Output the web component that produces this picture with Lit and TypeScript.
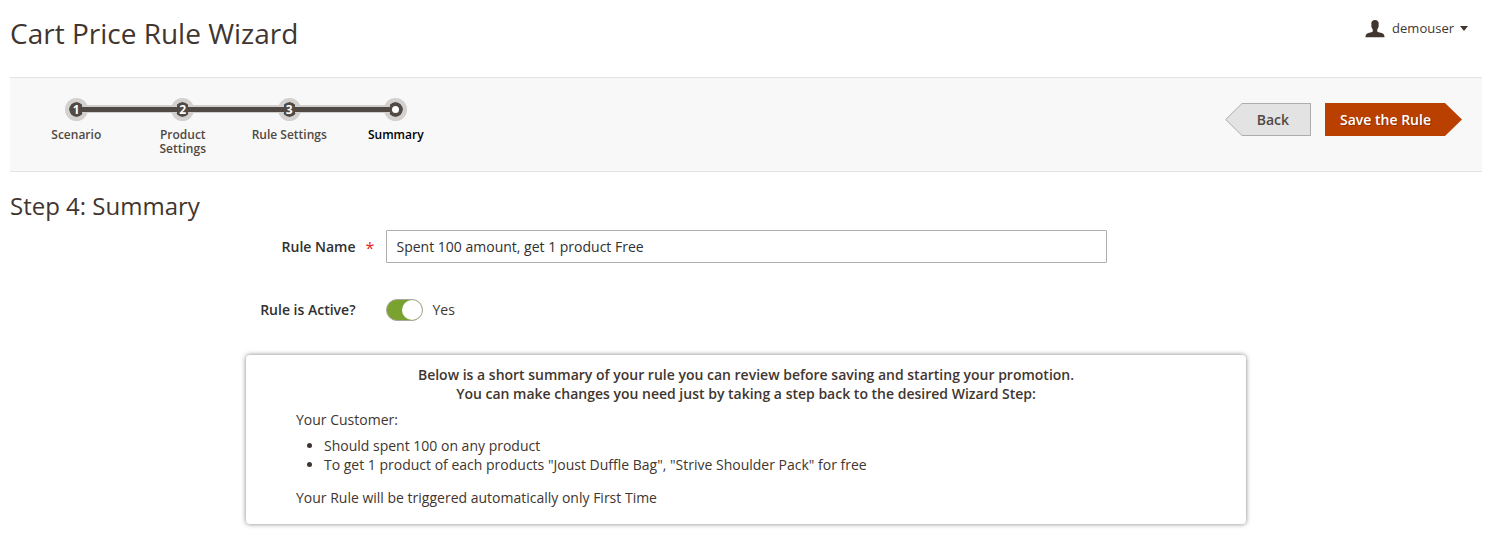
import { LitElement, html, css, svg } from "lit";
import { customElement, property, state } from "lit/decorators.js";
import { classMap } from "lit/directives/class-map.js";

interface Step {
  label: string;
}

@customElement("wizard-steps")
class WizardSteps extends LitElement {
  @property({ attribute: false }) steps: Step[] = [];
  @property({ type: Number }) current = 0;

  static styles = css`
    :host {
      display: block;
      width: 426px;
    }
    .list {
      display: flex;
      margin: 0;
      padding: 0;
      list-style: none;
    }
    .step {
      flex: 1 1 0;
      display: flex;
      flex-direction: column;
      align-items: center;
    }
    .rail {
      display: grid;
      grid-template-columns: 1fr 23px 1fr;
      align-items: center;
      align-self: stretch;
      height: 23px;
    }
    .line {
      z-index: 1;
      height: 5px;
      background: #514943;
      box-shadow: 0 -2px 0 #d0cfcd, 0 1px 0 #d0cfcd;
    }
    .line.before {
      margin-right: -6px;
    }
    .line.after {
      margin-left: -6px;
    }
    .line.none {
      visibility: hidden;
    }
    .ring {
      box-sizing: border-box;
      width: 23px;
      height: 23px;
      border: 4px solid #d2d1cf;
      border-radius: 50%;
      background: #514943;
      background-clip: padding-box;
      color: #fff;
      font-size: 12px;
      font-weight: 700;
      line-height: 15px;
      text-align: center;
    }
    .dot {
      width: 7px;
      height: 7px;
      margin: 4px;
      border-radius: 50%;
      background: #fff;
    }
    .label {
      display: block;
      max-width: 80px;
      margin-top: 7px;
      color: #514943;
      font-size: 12px;
      font-weight: 600;
      line-height: 14px;
      text-align: center;
      text-decoration: none;
    }
    .label.active {
      color: #000;
    }
  `;

  render() {
    const last = this.steps.length - 1;
    return html`<ol class="list">
      ${this.steps.map(
        (s, i) => html`<li class="step">
          <div class="rail">
            <span class=${classMap({ line: true, before: true, none: i === 0 })}></span>
            <div class="ring">
              ${i === this.current ? html`<div class="dot"></div>` : i + 1}
            </div>
            <span class=${classMap({ line: true, after: true, none: i === last })}></span>
          </div>
          <a class=${classMap({ label: true, active: i === this.current })} href="#">${s.label}</a>
        </li>`
      )}
    </ol>`;
  }
}

@customElement("app-root")
class AppRoot extends LitElement {
  @state() private active = true;

  private steps: Step[] = [
    { label: "Scenario" },
    { label: "Product Settings" },
    { label: "Rule Settings" },
    { label: "Summary" },
  ];

  static styles = css`
    :host {
      display: block;
      padding: 0 9px 27px 10px;
      background: #fff;
      color: #41362f;
      font-family: "Open Sans", "Noto Sans", sans-serif;
      font-size: 14px;
      line-height: 19px;
    }
    .header {
      display: flex;
      justify-content: space-between;
      align-items: flex-start;
      padding: 13px 14px 24px 0;
    }
    .title {
      margin: 0;
      font-size: 28px;
      font-weight: 400;
      line-height: 40px;
    }
    .user {
      display: flex;
      align-items: center;
      padding: 6px 0 0;
      border: 0;
      background: none;
      color: inherit;
      font: inherit;
      font-size: 13px;
    }
    .avatar {
      width: 20px;
      height: 18px;
      margin-right: 7px;
    }
    .caret {
      width: 8px;
      height: 5px;
      margin-left: 6px;
    }
    .bar {
      display: flex;
      justify-content: space-between;
      align-items: flex-start;
      padding: 20px 20px 15px 13px;
      border: solid #e3e3e3;
      border-width: 1px 0;
      background: #f8f8f8;
    }
    .actions {
      display: flex;
      gap: 14px;
      padding-top: 5px;
    }
    .btn {
      display: flex;
      height: 33px;
      padding: 0;
      border: 0;
      background: none;
      font: inherit;
      font-weight: 600;
    }
    .tip {
      flex: none;
      width: 17px;
      height: 33px;
    }
    .face {
      box-sizing: border-box;
      height: 33px;
      line-height: 33px;
    }
    .back {
      color: #514943;
    }
    .back .face {
      padding: 0 21px 0 15px;
      border: solid #adadad;
      border-width: 1px 1px 1px 0;
      background: #e3e3e3;
      line-height: 31px;
    }
    .save {
      color: #fff;
    }
    .save .face {
      padding: 0 14px 0 15px;
      background: #ba4000;
      text-shadow: 1px 1px 0 rgba(0, 0, 0, 0.25);
    }
    .heading {
      margin: 17px 0 8px;
      font-size: 24px;
      font-weight: 400;
      line-height: 33px;
    }
    .field {
      display: grid;
      grid-template-columns: 1fr calc(50% - 15px) 1fr;
      align-items: center;
      min-height: 33px;
      margin-bottom: 30px;
    }
    .name {
      display: flex;
      justify-content: flex-end;
      align-items: center;
      padding-right: 30px;
      color: #303030;
      font-weight: 600;
    }
    .name.required {
      gap: 10px;
      padding-right: 11px;
    }
    .star {
      width: 9px;
      padding-top: 4px;
      color: #e22626;
      font-weight: 400;
      font-size: 16px;
      line-height: 17px;
      text-align: center;
    }
    .text {
      box-sizing: border-box;
      width: 100%;
      height: 33px;
      padding: 0 10px;
      border: 1px solid #adadad;
      border-radius: 1px;
      background: #fff;
      color: #303030;
      font: inherit;
    }
    .toggle {
      display: flex;
      align-items: center;
      gap: 10px;
    }
    .switch {
      appearance: none;
      box-sizing: border-box;
      display: flex;
      width: 37px;
      height: 22px;
      margin: 0;
      border: 1px solid #aaa6a0;
      border-radius: 11px;
      background: #e3e3e3;
    }
    .switch::before {
      content: "";
      width: 20px;
      height: 20px;
      border-radius: 50%;
      background: #fff;
    }
    .switch:checked {
      justify-content: flex-end;
      background: #79a22e;
    }
    .summary {
      box-sizing: border-box;
      max-width: 1000px;
      margin: -1px auto 0;
      padding: 10px 50px 17px;
      border-radius: 4px;
      background: #fff;
      box-shadow: 0 0 5px rgba(0, 0, 0, 0.5);
    }
    .intro {
      margin: 0 0 7px;
      font-weight: 600;
      text-align: center;
    }
    .line {
      margin: 0;
    }
    .rules {
      margin: 7px 0 14px;
      padding-left: 28px;
    }
  `;

  render() {
    return html`
      <header class="header">
        <h1 class="title">Cart Price Rule Wizard</h1>
        <button class="user" type="button">
          <svg class="avatar" viewBox="0 0 20 18" aria-hidden="true">
            ${svg`<path fill="#41362f" d="M10 0C7.800 0 6.300 1.300 6.300 3.500C6.300 4.300 6.400 4.900 6.500 5.400C6 5.700 6.200 7.200 6.900 7.500C7.100 8.600 7.400 9.300 7.800 9.800V11.400C7 12.300 4.600 12.500 2.700 13.200C1 13.900 0.500 15.200 0.500 17.200H19.500C19.500 15.200 19 13.900 17.300 13.200C15.400 12.500 13 12.300 12.200 11.400V9.800C12.600 9.300 12.900 8.600 13.100 7.500C13.800 7.200 14 5.700 13.500 5.400C13.600 4.900 13.700 4.300 13.700 3.500C13.700 1.300 12.200 0 10 0Z"/>`}
          </svg>
          demouser
          <svg class="caret" viewBox="0 0 8 5" aria-hidden="true">
            <path fill="#41362f" d="M0 0H8L4 5Z" />
          </svg>
        </button>
      </header>

      <div class="bar">
        <wizard-steps .steps=${this.steps} .current=${3}></wizard-steps>
        <div class="actions">
          <button class="btn back" type="button">
            <svg class="tip" viewBox="0 0 17 33" aria-hidden="true">
              <path fill="#e3e3e3" stroke="#adadad" d="M18 0.500H17L0.700 16.500L17 32.500H18" />
            </svg>
            <span class="face">Back</span>
          </button>
          <button class="btn save" type="button">
            <span class="face">Save the Rule</span>
            <svg class="tip" viewBox="0 0 17 33" aria-hidden="true">
              <path fill="#ba4000" d="M0 0L17 16.500L0 33Z" />
            </svg>
          </button>
        </div>
      </div>

      <h2 class="heading">Step 4: Summary</h2>
      <div class="field">
        <label class="name required" for="rule-name">Rule Name <span class="star">*</span></label>
        <input class="text" id="rule-name" type="text" value="Spent 100 amount, get 1 product Free" />
      </div>
      <div class="field">
        <label class="name" for="rule-active">Rule is Active?</label>
        <div class="toggle">
          <input
            class="switch"
            id="rule-active"
            type="checkbox"
            .checked=${this.active}
            @change=${(e: Event) => (this.active = (e.target as HTMLInputElement).checked)}
          />
          <span>${this.active ? "Yes" : "No"}</span>
        </div>
      </div>

      <section class="summary">
        <p class="intro">
          Below is a short summary of your rule you can review before saving and starting your promotion.<br />
          You can make changes you need just by taking a step back to the desired Wizard Step:
        </p>
        <p class="line">Your Customer:</p>
        <ul class="rules">
          <li>Should spent 100 on any product</li>
          <li>To get 1 product of each products "Joust Duffle Bag", "Strive Shoulder Pack" for free</li>
        </ul>
        <p class="line">Your Rule will be triggered automatically only First Time</p>
      </section>
    `;
  }
}
